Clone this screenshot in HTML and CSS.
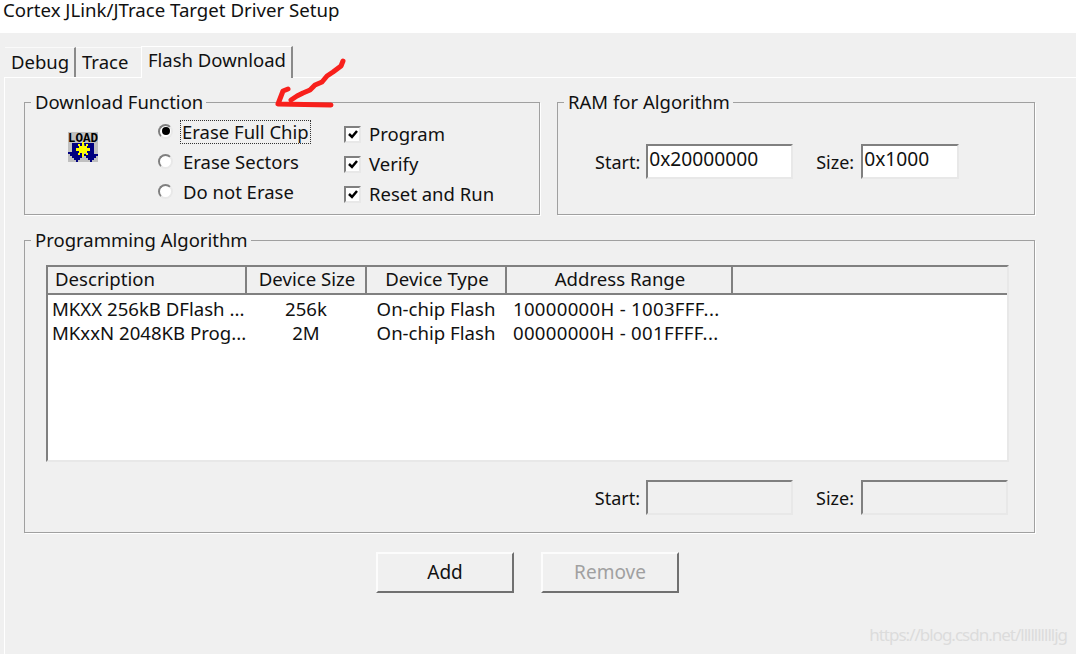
FILE: index.html
```html
<!DOCTYPE html>
<html lang="en">

<head>
    <meta charset="UTF-8">
    <meta name="viewport" content="width=device-width, initial-scale=1.0">
    <title>Cortex JLink/JTrace Target Driver Setup</title>
    <link rel="stylesheet" href="styles.css">
</head>

<body>
    <div class="title-bar">Cortex JLink/JTrace Target Driver Setup</div>

    <div class="tabs">
        <div class="tab tab-debug">Debug</div>
        <div class="tab tab-trace">Trace</div>
        <div class="tab active">Flash Download</div>
    </div>

    <div class="panel">
        <div class="top-groups">
            <fieldset class="group download-group">
                <legend>Download Function</legend>
                <div class="download-body">
                    <svg class="load-icon" width="30" height="30" viewBox="0 0 30 30">
                        <rect width="30" height="30" fill="#c0c0c0" />
                        <text x="0" y="10" textLength="30" lengthAdjust="spacingAndGlyphs" class="load-text">LOAD</text>
                        <path d="M4 11h10v11h2v2h-2v2h-2v2h-2v2H8v-2H6v-2H4v-2H2v-2H0v-2h4z" fill="#000080" />
                        <path d="M16 11h10v11h4v2h-2v2h-2v2h-2v2h-2v-2h-2v-2h-2v-2h-2v-2h2z" fill="#000080" />
                        <path d="M11 14h8v7h-8z M14 10h2v15h-2z M8 16h14v3H8z M10 12h2v2h-2z M18 12h2v2h-2z M10 21h2v2h-2z M18 21h2v2h-2z" fill="#ffff00" />
                    </svg>
                    <div class="radio-col">
                        <div class="option"><span class="radio checked"></span><span class="focus-label">Erase Full Chip</span></div>
                        <div class="option"><span class="radio"></span><span>Erase Sectors</span></div>
                        <div class="option"><span class="radio"></span><span>Do not Erase</span></div>
                    </div>
                    <div class="check-col">
                        <div class="option">
                            <span class="check"><svg width="12" height="12" viewBox="0 0 12 12"><path d="M2 6l3 3 5-6" fill="none" stroke="#000" stroke-width="2.5" /></svg></span>Program
                        </div>
                        <div class="option">
                            <span class="check"><svg width="12" height="12" viewBox="0 0 12 12"><path d="M2 6l3 3 5-6" fill="none" stroke="#000" stroke-width="2.5" /></svg></span>Verify
                        </div>
                        <div class="option">
                            <span class="check"><svg width="12" height="12" viewBox="0 0 12 12"><path d="M2 6l3 3 5-6" fill="none" stroke="#000" stroke-width="2.5" /></svg></span>Reset and Run
                        </div>
                    </div>
                </div>
            </fieldset>

            <fieldset class="group ram-group">
                <legend>RAM for Algorithm</legend>
                <div class="ram-body">
                    <label class="field-label">Start:</label>
                    <input class="field start-field" value="0x20000000">
                    <label class="field-label size-label">Size:</label>
                    <input class="field size-field" value="0x1000">
                </div>
            </fieldset>
        </div>

        <fieldset class="group algo-group">
            <legend>Programming Algorithm</legend>
            <div class="algo-body">
                <div class="table-box">
                    <table>
                        <colgroup>
                            <col class="col-desc">
                            <col class="col-size">
                            <col class="col-type">
                            <col class="col-range">
                            <col>
                        </colgroup>
                        <thead>
                            <tr>
                                <th class="left">Description</th>
                                <th>Device Size</th>
                                <th>Device Type</th>
                                <th>Address Range</th>
                                <th></th>
                            </tr>
                        </thead>
                        <tbody>
                            <tr>
                                <td class="desc">MKXX 256kB DFlash ...</td>
                                <td class="center">256k</td>
                                <td class="center">On-chip Flash</td>
                                <td class="range">10000000H - 1003FFF...</td>
                                <td></td>
                            </tr>
                            <tr>
                                <td class="desc">MKxxN 2048KB Prog...</td>
                                <td class="center">2M</td>
                                <td class="center">On-chip Flash</td>
                                <td class="range">00000000H - 001FFFF...</td>
                                <td></td>
                            </tr>
                        </tbody>
                    </table>
                </div>
                <div class="range-row">
                    <label class="field-label">Start:</label>
                    <input class="field start-field" disabled>
                    <label class="field-label size-label">Size:</label>
                    <input class="field wide-size" disabled>
                </div>
            </div>
        </fieldset>

        <div class="buttons">
            <button class="btn">Add</button>
            <button class="btn" disabled>Remove</button>
        </div>
    </div>

    <!-- hand drawn arrow on top of the dialog -->
    <svg class="scribble" width="80" height="60" viewBox="0 0 80 60">
        <path d="M68 3 L66 8 L58 14 L52 18 L47 24 L40 27 L35 32 L28 35 L22 38 L16 42" fill="none" stroke="#f8201c" stroke-width="5" stroke-linecap="round" stroke-linejoin="round" />
        <path d="M13 31 L8 33 L3 46 L56 47" fill="none" stroke="#f8201c" stroke-width="5" stroke-linecap="round" stroke-linejoin="round" />
    </svg>

    <div class="watermark">https://blog.csdn.net/lllllllllljg</div>
</body>

</html>
```

FILE: styles.css
```css
* {
    margin: 0;
    padding: 0;
    box-sizing: border-box;
}

body {
    width: 1076px;
    height: 654px;
    overflow: hidden;
    position: relative;
    background-color: #f0f0f0;
    color: #111;
    font-family: "Noto Sans", sans-serif;
    font-size: 18.5px;
}

.title-bar {
    height: 33px;
    line-height: 20px;
    padding-left: 3px;
    background-color: white;
    font-size: 18.65px;
}

.tabs {
    display: flex;
    align-items: flex-end;
    height: 44px;
    padding-left: 5px;
}

.tab {
    height: 30px;
    line-height: 28px;
    padding-left: 6px;
    border-top: 1px solid #fafafa;
    border-right: 2px solid #8a8a8a;
}

.tab-debug {
    width: 71px;
}

.tab-trace {
    width: 65px;
    padding-left: 6px;
    border-right: 0;
}

.active {
    width: 152px;
    height: 32px;
    line-height: 26px;
    border-top: 1px solid white;
    border-left: 1px solid white;
    position: relative;
    top: 1px;
    background-color: #f0f0f0;
}

.panel {
    margin-left: 4px;
    padding: 11px 0 0 19px;
    border-top: 1px solid white;
    border-left: 1px solid white;
    height: 577px;
}

.top-groups {
    display: flex;
    gap: 17px;
}

.group {
    border: 1px solid #a0a0a0;
    box-shadow: 1px 1px 0 white;
}

.group legend {
    margin-left: 6px;
    padding: 0 3px 0 4px;
    height: 26px;
    line-height: 26px;
}

.download-group {
    width: 516px;
    height: 126px;
}

.download-body {
    display: flex;
    padding: 2px 0 0 43px;
}

.load-icon {
    flex: none;
    margin: 15px 60px 0 0;
}

.load-text {
    font-family: "Liberation Mono", monospace;
    font-weight: bold;
    font-size: 13px;
    fill: #000;
}

.radio-col {
    width: 186px;
}

.option {
    height: 30px;
    line-height: 22px;
    display: flex;
    align-items: center;
}

.radio {
    width: 15px;
    height: 15px;
    margin-right: 10px;
    border-radius: 50%;
    background-color: white;
    border: 2px solid;
    border-color: #808080 #e8e8e8 #e8e8e8 #808080;
    display: flex;
    align-items: center;
    justify-content: center;
    position: relative;
    top: -1px;
}

.checked::after {
    content: "";
    width: 8px;
    height: 8px;
    border-radius: 50%;
    background-color: black;
}

.focus-label {
    outline: 1px dotted #333;
    padding: 0 1px;
    margin-left: -2px;
    line-height: 22px;
}

.check-col {
    padding-top: 2px;
}

.check {
    width: 17px;
    height: 17px;
    margin-right: 8px;
    background-color: white;
    border: 2px solid;
    border-color: #808080 #e8e8e8 #e8e8e8 #808080;
    display: flex;
    align-items: center;
    justify-content: center;
}

.ram-group {
    width: 478px;
    height: 126px;
}

.ram-body {
    height: 98px;
    display: flex;
    align-items: center;
    padding: 0 0 5px 37px;
}

.field-label {
    margin-right: 6px;
    font-size: 18px;
}

.size-label {
    width: 38px;
    margin: 0 7px 0 23px;
    white-space: nowrap;
}

.field {
    height: 35px;
    padding: 0 0 7px 1px;
    border: 2px solid;
    border-color: #808080 #e8e8e8 #e8e8e8 #808080;
    background-color: white;
    font-family: inherit;
    font-size: 19.2px;
    color: #111;
    outline: none;
}

.field:disabled {
    background-color: #f0f0f0;
}

.start-field {
    width: 147px;
}

.size-field {
    width: 98px;
}

.wide-size {
    width: 147px;
}

.algo-group {
    width: 1011px;
    height: 306px;
    margin-top: 12px;
}

.algo-body {
    padding: 12px 0 0 21px;
}

.table-box {
    width: 963px;
    height: 197px;
    background-color: white;
    border: 2px solid;
    border-color: #808080 #e8e8e8 #e8e8e8 #808080;
}

table {
    width: 100%;
    table-layout: fixed;
    border-collapse: collapse;
    font-size: 18.6px;
    line-height: 22px;
}

.col-desc {
    width: 198px;
}

.col-size {
    width: 120px;
}

.col-type {
    width: 140px;
}

.col-range {
    width: 226px;
}

th {
    height: 27px;
    font-weight: normal;
    background-color: #f0f0f0;
    border-right: 2px solid #808080;
    border-bottom: 2px solid #808080;
    padding: 0 0 2px 2px;
}

th:last-child {
    border-right: 0;
}

th.left {
    text-align: left;
    padding-left: 7px;
}

td {
    height: 25px;
    padding: 0;
    white-space: nowrap;
}

tbody tr:first-child td {
    height: 26px;
    padding-top: 3px;
}

.desc {
    padding-left: 4px;
}

.center {
    text-align: center;
}

.range {
    padding-left: 7px;
    letter-spacing: 0.3px;
}

.range-row {
    display: flex;
    justify-content: flex-end;
    align-items: center;
    width: 962px;
    margin-top: 18px;
}

.buttons {
    display: flex;
    gap: 27px;
    margin: 19px 0 0 352px;
}

.btn {
    width: 138px;
    height: 41px;
    padding-bottom: 2px;
    font-family: inherit;
    font-size: 19px;
    color: #111;
    background-color: #f0f0f0;
    border: 2px solid;
    border-color: #fcfcfc #707070 #707070 #fcfcfc;
}

.btn:disabled {
    color: #a0a0a0;
}

.scribble {
    position: absolute;
    left: 275px;
    top: 58px;
}

.watermark {
    position: absolute;
    right: 9px;
    top: 623px;
    font-size: 17px;
    letter-spacing: -1px;
    color: #dcdcdc;
}
```
